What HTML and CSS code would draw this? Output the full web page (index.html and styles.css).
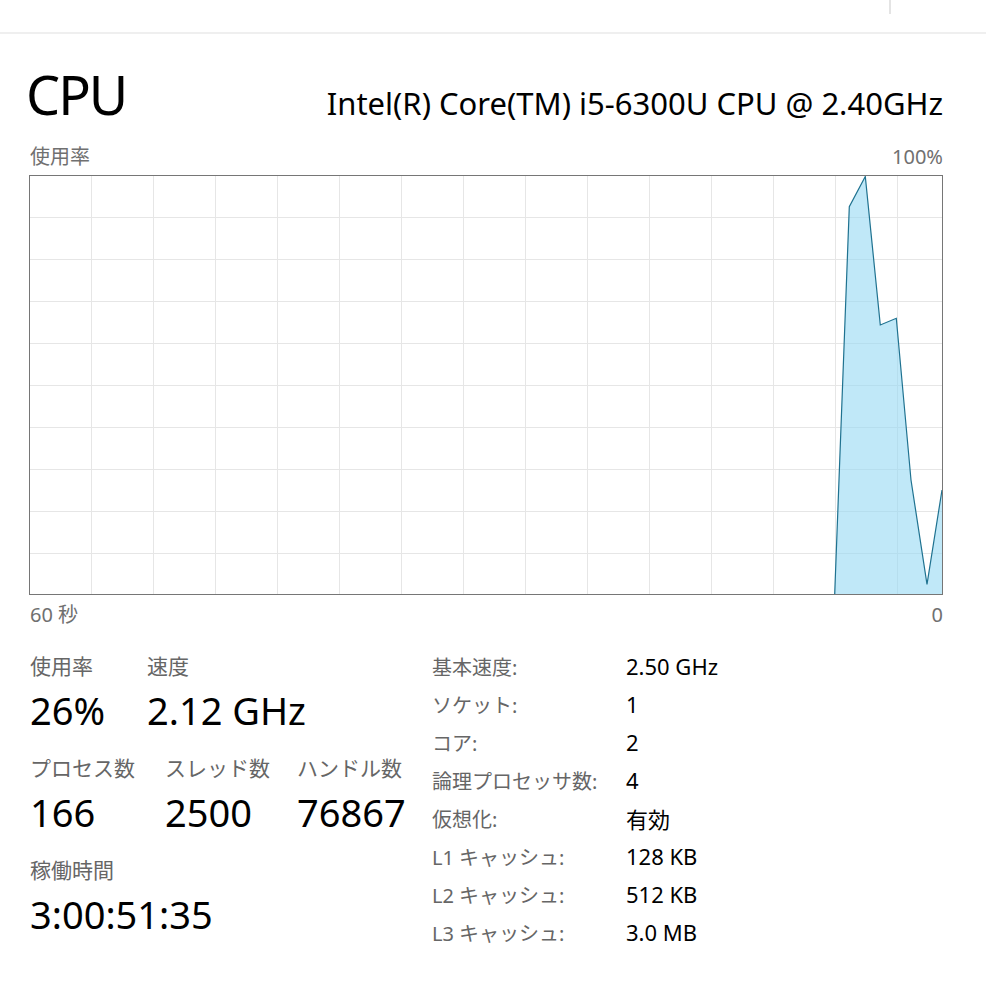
FILE: index.html
```html
<!DOCTYPE html>
<html lang="ja">
<head>
  <meta charset="UTF-8" />
  <title>CPU - パフォーマンス</title>
  <link rel="stylesheet" href="styles.css">
</head>
<body>
  <div class="topbar"><span class="topbar-split"></span></div>

  <div class="page">
    <div class="head">
      <h1>CPU</h1>
      <div class="model">Intel(R) Core(TM) i5-6300U CPU @ 2.40GHz</div>
    </div>

    <div class="axis">
      <span>使用率</span>
      <span>100%</span>
    </div>

    <div class="graph">
      <svg width="912" height="418" viewBox="0 0 912 418">
        <g class="grid">
          <line x1="61.5" y1="0" x2="61.5" y2="418" />
          <line x1="123.5" y1="0" x2="123.5" y2="418" />
          <line x1="185.5" y1="0" x2="185.5" y2="418" />
          <line x1="247.5" y1="0" x2="247.5" y2="418" />
          <line x1="309.5" y1="0" x2="309.5" y2="418" />
          <line x1="371.5" y1="0" x2="371.5" y2="418" />
          <line x1="433.5" y1="0" x2="433.5" y2="418" />
          <line x1="495.5" y1="0" x2="495.5" y2="418" />
          <line x1="557.5" y1="0" x2="557.5" y2="418" />
          <line x1="619.5" y1="0" x2="619.5" y2="418" />
          <line x1="681.5" y1="0" x2="681.5" y2="418" />
          <line x1="743.5" y1="0" x2="743.5" y2="418" />
          <line x1="805.5" y1="0" x2="805.5" y2="418" />
          <line x1="867.5" y1="0" x2="867.5" y2="418" />
          <line x1="0" y1="41.5" x2="912" y2="41.5" />
          <line x1="0" y1="83.5" x2="912" y2="83.5" />
          <line x1="0" y1="125.5" x2="912" y2="125.5" />
          <line x1="0" y1="167.5" x2="912" y2="167.5" />
          <line x1="0" y1="209.5" x2="912" y2="209.5" />
          <line x1="0" y1="251.5" x2="912" y2="251.5" />
          <line x1="0" y1="293.5" x2="912" y2="293.5" />
          <line x1="0" y1="335.5" x2="912" y2="335.5" />
          <line x1="0" y1="377.5" x2="912" y2="377.5" />
        </g>
        <polygon class="area" points="804.7,418 819.3,30.7 835.3,0 850.3,149 866.3,142.3 881,304 897,408.3 912,314 912,418" />
        <polyline class="line" points="804.7,418 819.3,30.7 835.3,0.5 850.3,149 866.3,142.3 881,304 897,408.3 912,314" />
      </svg>
    </div>

    <div class="axis axis-bottom">
      <span>60 秒</span>
      <span>0</span>
    </div>

    <div class="stats">
      <div class="stats-left">
        <div class="stat-row row-usage">
          <div class="stat">
            <div class="stat-label">使用率</div>
            <div class="stat-value">26%</div>
          </div>
          <div class="stat">
            <div class="stat-label">速度</div>
            <div class="stat-value">2.12 GHz</div>
          </div>
        </div>
        <div class="stat-row row-counts">
          <div class="stat">
            <div class="stat-label">プロセス数</div>
            <div class="stat-value">166</div>
          </div>
          <div class="stat">
            <div class="stat-label">スレッド数</div>
            <div class="stat-value">2500</div>
          </div>
          <div class="stat">
            <div class="stat-label">ハンドル数</div>
            <div class="stat-value">76867</div>
          </div>
        </div>
        <div class="stat-row">
          <div class="stat">
            <div class="stat-label">稼働時間</div>
            <div class="stat-value">3:00:51:35</div>
          </div>
        </div>
      </div>

      <dl class="specs">
        <dt>基本速度:</dt><dd>2.50 GHz</dd>
        <dt>ソケット:</dt><dd>1</dd>
        <dt>コア:</dt><dd>2</dd>
        <dt>論理プロセッサ数:</dt><dd>4</dd>
        <dt>仮想化:</dt><dd>有効</dd>
        <dt>L1 キャッシュ:</dt><dd>128 KB</dd>
        <dt>L2 キャッシュ:</dt><dd>512 KB</dd>
        <dt>L3 キャッシュ:</dt><dd>3.0 MB</dd>
      </dl>
    </div>
  </div>
</body>
</html>
```

FILE: styles.css
```css
/* Task Manager - CPU performance pane */
body {
  margin: 0;
  background-color: #fff;
  color: #000;
  font-family: "Noto Sans", "Noto Sans CJK JP", sans-serif;
}

.topbar {
  height: 32px;
  border-bottom: 2px solid #efefef;
  position: relative;
}

.topbar-split {
  position: absolute;
  left: 889px;
  top: 0;
  width: 2px;
  height: 14px;
  background-color: #e4e4e4;
}

.page {
  padding: 0 43px 0 29px;
}

.head {
  display: flex;
  justify-content: space-between;
  align-items: baseline;
  height: 88px;
  padding-top: 16px;
}

.head h1 {
  margin: 0 0 0 -3px;
  font-size: 54px;
  font-weight: normal;
  line-height: 88px;
  letter-spacing: -2px;
}

.model {
  font-size: 31px;
  line-height: 88px;
}

.axis {
  display: flex;
  justify-content: space-between;
  font-size: 20px;
  color: #707070;
  height: 37px;
  line-height: 37px;
  padding-left: 1px;
}

.graph {
  width: 912px;
  height: 418px;
  border: 1px solid #767676;
}

.graph svg {
  display: block;
}

.grid line {
  stroke: #e6e6e6;
  stroke-width: 1;
}

.area {
  fill: rgb(150, 216, 244);
  fill-opacity: 0.6;
}

.line {
  fill: none;
  stroke: #1f7290;
  stroke-width: 1.2;
}

.axis-bottom {
  height: 40px;
  line-height: 40px;
}

.stats {
  display: flex;
  padding: 12px 0 0 1px;
}

.stats-left {
  width: 402px;
  display: flex;
  flex-direction: column;
  gap: 14px;
}

.stat-row {
  display: grid;
  grid-auto-flow: column;
  justify-content: start;
}

.row-usage {
  grid-template-columns: 117px auto;
}

.row-counts {
  grid-template-columns: 135px 132px auto;
}

.stat-label {
  font-size: 21px;
  color: #666;
  line-height: 38px;
}

.stat-value {
  font-size: 38px;
  line-height: 50px;
  color: #000;
  white-space: nowrap;
}

.specs {
  margin: 0;
  display: grid;
  grid-template-columns: 194px auto;
  grid-auto-rows: 38px;
  align-items: center;
  font-size: 20px;
}

.specs dt {
  color: #666;
}

.specs dd {
  margin: 0;
  font-size: 22px;
  color: #000;
}
```
